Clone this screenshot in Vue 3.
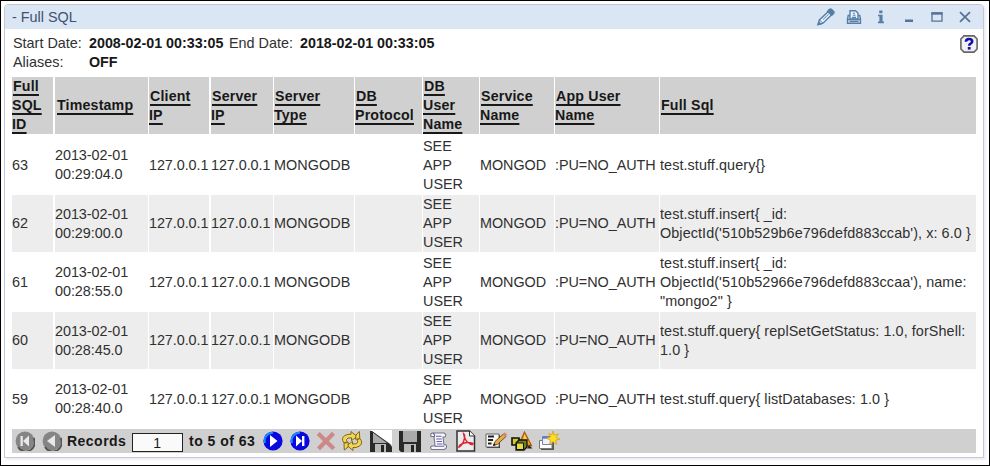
<script setup>
const columns = [
  { key: 'id', lines: ['Full', 'SQL', 'ID'] },
  { key: 'time', lines: ['Timestamp'] },
  { key: 'client', lines: ['Client', 'IP'] },
  { key: 'server', lines: ['Server', 'IP'] },
  { key: 'type', lines: ['Server', 'Type'] },
  { key: 'protocol', lines: ['DB', 'Protocol'] },
  { key: 'dbuser', lines: ['DB', 'User', 'Name'] },
  { key: 'service', lines: ['Service', 'Name'] },
  { key: 'appuser', lines: ['App User', 'Name'] },
  { key: 'sql', lines: ['Full Sql'] },
]

const record = (id, time, sql) => ({
  id: [id],
  time: ['2013-02-01', time],
  client: ['127.0.0.1'],
  server: ['127.0.0.1'],
  type: ['MONGODB'],
  protocol: [],
  dbuser: ['SEE', 'APP', 'USER'],
  service: ['MONGOD'],
  appuser: [':PU=NO_AUTH'],
  sql,
})

const rows = [
  record('63', '00:29:04.0', ['test.stuff.query{}']),
  record('62', '00:29:00.0', ['test.stuff.insert{ _id:', "ObjectId('510b529b6e796defd883ccab'), x: 6.0 }"]),
  record('61', '00:28:55.0', ['test.stuff.insert{ _id:', "ObjectId('510b52966e796defd883ccaa'), name:", '"mongo2" }']),
  record('60', '00:28:45.0', ['test.stuff.query{ replSetGetStatus: 1.0, forShell:', '1.0 }']),
  record('59', '00:28:40.0', ['test.stuff.query{ listDatabases: 1.0 }']),
]
</script>

<template>
  <div class="frame">
    <section class="panel">
      <header class="titlebar">
        <h1>- Full SQL</h1>
        <div class="window-tools">
          <svg width="18" height="18" viewBox="0 0 18 18" fill="none" stroke="#557fa6" stroke-width="1.4">
            <path d="M1 16.6 2.4 12 11.4 3.4 14.8 6.6 6 15.2Z" fill="#edf3fb" />
            <path d="M10.6 3.2 12.6 1.2Q13.5.5 14.4 1.2L16.8 3.6Q17.4 4.6 16.6 5.4L14.7 7.2Z" fill="#557fa6" />
            <path d="M2.4 12 6 15.2M6 11.6 11.6 6.2" stroke-width="1" />
            <path d="M1 16.6 1.8 14.2 3.6 16Z" fill="#557fa6" />
          </svg>
          <svg width="16" height="16" viewBox="0 0 16 16" fill="none" stroke="#557fa6" stroke-width="1.4">
            <path d="M4 10V1.7H9.5L12 4V10Z" fill="#edf3fb" />
            <path d="M4 6.5H2.2L1.5 10V14.2H14.5V10L13.8 6.5H12M1.5 10.5H14.5M3.5 12.4H12.5" />
            <path d="M6.8 4.2H9M6.8 6.3H9.5M6 8.4H10" stroke-width="1.1" />
          </svg>
          <svg width="10" height="16" viewBox="0 0 10 16" fill="#557fa6">
            <path d="M3.2 1.5H6.4V4.2H3.2ZM2 5.7H6.6V12.5H8V14.2H2V12.5H3.4V7.3H2Z" />
          </svg>
          <svg width="14" height="16" viewBox="0 0 14 16" fill="#587399"><path d="M3 10.5H11V13H3Z" /></svg>
          <svg width="14" height="16" viewBox="0 0 14 16" fill="none" stroke="#587399">
            <path d="M2 4H12V12.2H2Z" stroke-width="1.3" /><path d="M1.4 4.5H12.6" stroke-width="2.4" />
          </svg>
          <svg width="14" height="16" viewBox="0 0 14 16" stroke="#587399" stroke-width="1.8"><path d="M2 3.2 12 12.9M12 3.2 2 12.9" /></svg>
        </div>
      </header>

      <div class="summary">
        <dl>
          <dt>Start Date:</dt><dd>2008-02-01 00:33:05</dd>
          <dt class="end">End Date:</dt><dd>2018-02-01 00:33:05</dd>
          <dt>Aliases:</dt><dd>OFF</dd>
        </dl>
        <svg class="help" width="18" height="18" viewBox="0 0 18 18">
          <path d="M4 .9H14L17.1 4V14L14 17.1H4L.9 14V4Z" fill="#f1f1f4" stroke="#666" stroke-width="1.6" />
          <path d="M5.9 6.8Q5.9 4 9 4T12.2 6.5Q12.2 7.8 10.6 8.6 9.2 9.3 9.2 10.8" fill="none" stroke="#1010aa" stroke-width="2.6" />
          <path d="M7.8 12H10.6V14.6H7.8Z" fill="#1010aa" />
        </svg>
      </div>

      <div class="table" role="table">
        <div class="row head" role="row">
          <div v-for="c in columns" :key="c.key" class="cell" :class="c.key" role="columnheader">
            <span v-for="line in c.lines" :key="line">{{ line }}</span>
          </div>
        </div>
        <div v-for="(r, i) in rows" :key="i" class="row" :class="i % 2 ? 'shaded' : 'plain'" role="row">
          <div v-for="c in columns" :key="c.key" class="cell" :class="c.key" role="cell">
            <span v-for="line in r[c.key]" :key="line">{{ line }}</span>
          </div>
        </div>
      </div>

      <footer class="toolbar">
        <svg width="20" height="20" viewBox="0 0 20 20">
          <circle cx="10" cy="10" r="9.4" fill="#858585" /><path d="M3 16A9 9 0 0 0 18.6 7" fill="none" stroke="#555" stroke-width="1.8" />
          <path d="M5.5 5H7.8V15H5.5ZM14 4.5V15.5L8 10Z" fill="#e9e9e9" />
        </svg>
        <svg class="prev" width="20" height="20" viewBox="0 0 20 20">
          <circle cx="10" cy="10" r="9.4" fill="#858585" /><path d="M3 16A9 9 0 0 0 18.6 7" fill="none" stroke="#555" stroke-width="1.8" />
          <path d="M13 4V16L5 10Z" fill="#e9e9e9" />
        </svg>
        <span class="records">Records</span>
        <span class="page">1</span>
        <span class="total">to 5 of 63</span>
        <svg class="next" width="20" height="20" viewBox="0 0 20 20">
          <circle cx="10" cy="10" r="9.6" fill="#0808df" /><path d="M2 12A8 8 0 0 1 10 1.8" fill="none" stroke="#168bff" stroke-width="2" />
          <path d="M7 4V16L14.5 10Z" fill="#fff" />
        </svg>
        <svg class="last" width="20" height="20" viewBox="0 0 20 20">
          <circle cx="10" cy="10" r="9.6" fill="#0808df" /><path d="M2 12A8 8 0 0 1 10 1.8" fill="none" stroke="#168bff" stroke-width="2" />
          <path d="M6 4.5V15.5L12 10ZM12 5H14.4V15H12Z" fill="#fff" />
        </svg>
        <svg class="delete" width="20" height="20" viewBox="0 0 20 20" stroke="#cc8988" stroke-width="4.2"><path d="M2.2 2.5 17.8 17.8M17.5 2.2 2.5 17.8" /></svg>
        <svg class="refresh" width="22" height="22" viewBox="0 0 22 22" stroke="#806522" stroke-width="1" fill="#f4d74a">
          <path d="M3 13Q-.5 8 4 5.5Q7 3.8 10 4.3V1.5L16 6.5 10.5 10.5V7.8Q6 7.4 5.5 9.5Q5.3 10.8 6.4 11.6Z" />
          <path d="M19 8.5Q22.8 13.5 18 16.3Q15 18 12 17.5V20.5L6 15.5 11.5 11.3V14.1Q16 14.4 16.8 12.3Q17 11 15.8 9.8Z" />
          <path d="M15 5 18.3 1.5 18.8 8.5 14.6 9.3Z" /><path d="M7 17 3.3 20 3 13.2 7.3 12.5Z" />
        </svg>
        <svg class="save-as" width="22" height="22" viewBox="0 0 22 22">
          <path d="M0 0H22V15Z" fill="#fff" /><path d="M0 1H2L20 14 22 17V22H0Z" fill="#292929" />
          <path d="M3 2.8 17 13H3Z" fill="#aaa" /><path d="M5 14H16V22H5Z" fill="#b9b9b9" /><path d="M11 15H14V22H11Z" fill="#222" />
        </svg>
        <svg class="save" width="22" height="22" viewBox="0 0 22 22">
          <path d="M0 1H22V22H2L0 20Z" fill="#292929" /><path d="M4 1H18V12H4Z" fill="#aaa" />
          <path d="M5 14H17V22H5Z" fill="#b9b9b9" /><path d="M12 15H15V22H12Z" fill="#222" />
        </svg>
        <svg class="script" width="20" height="20" viewBox="0 0 20 20" fill="#f8f7ff" stroke="#77778c" stroke-width="1.1">
          <path d="M4 2Q1 2 2 5.5H5L6 15H3Q.5 16 2.5 18.5H15Q18.8 17 17 13.8H15L14 6H16Q18 3.5 15 2Z" />
          <path d="M5 6Q6.8 4.5 4 2M6 15.2H15.3M7 5.2H12.5M7.2 8H12.7M7.5 10.5H13M8 13H13.5" stroke="#6262a3" fill="none" />
        </svg>
        <svg class="pdf" width="20" height="22" viewBox="0 0 20 22">
          <path d="M1 1H13.5L18.5 6V21H1Z" fill="#ececef" stroke="#323232" stroke-width="1.5" />
          <path d="M13.5 1V6H18.5" fill="#fff" stroke="#323232" />
          <path d="M7.6 3.5Q8.5 10 12.5 13T17 13.5Q12 11.5 7.5 13.2T3 17Q7.5 14.5 8.6 7.5Q9 4.5 7.6 3.5Z" fill="none" stroke="#e02229" stroke-width="1.5" />
        </svg>
        <svg class="edit" width="22" height="20" viewBox="0 0 22 20">
          <path d="M2 4H15V17H2Z" fill="#333" /><path d="M1 3H14V16H1Z" fill="#f7f7f5" stroke="#666" />
          <path d="M3 5.5H9M3 9H8M3 12.5H6.5" stroke="#222" stroke-width="1.9" />
          <path d="M8.5 14.5 10 10.5 18.5 3 21 5.5 12.4 13.3Z" fill="#e8ac4c" stroke="#74521e" /><path d="M18 3 20 1.2 22 3.5 20.8 5.8Z" fill="#d88672" /><path d="M8 15 9 12.3 10.7 14Z" fill="#111" />
        </svg>
        <svg class="shapes" width="22" height="20" viewBox="0 0 22 20" stroke="#111">
          <path d="M13.5 1.2 20.5 14.5H7.5Z" fill="#ff9d16" stroke="#a65b10" stroke-width="1.3" /><path d="M13.5 3 17.5 12H12Z" fill="#ffd34b" stroke="none" />
          <path d="M1 7H8V14H1Z" fill="#cfca2d" stroke-width="1.6" /><path d="M5 12 8 9H16V16L13 19H5Z" fill="#777b22" stroke-width="1.3" /><path d="M5.5 12H12.5V18.5H5.5Z" fill="#e3df35" /><path d="M18 14 21.5 17.5H16Z" fill="#222" stroke="none" />
        </svg>
        <svg class="new" width="22" height="20" viewBox="0 0 22 20">
          <path d="M3 11H16V19H3Z" fill="#555" /><path d="M1.5 9.5H14V17.5H1.5Z" fill="#fff" stroke="#777" />
          <path d="M4.5 5.5H14V13.5H4.5Z" fill="#f1f1fb" stroke="#7783b2" /><path d="M4.5 5.5H12V7.7H4.5Z" fill="#637bc8" />
          <path d="M15 0 16.3 4.2 20.5 2.8 18 6.3 22 8.3 17.8 9 18.5 13.5 15 10.7 11.6 13 12.4 9 8.5 7.3 12.5 6 10.8 2.2 14 4Z" fill="#ffdc28" stroke="#d3a415" stroke-width=".8" />
        </svg>
      </footer>
    </section>
  </div>
</template>

<style>
body { margin: 0; background: #fff; }
</style>

<style scoped>
* { box-sizing: border-box; }
svg { display: block; flex: none; }
.frame {
  width: 990px;
  height: 466px;
  padding: 3px 5px 7px 3px;
  border: 1px solid #000;
  background: #fff;
  font-family: "Liberation Sans", Arial, sans-serif;
  font-size: 14.4px;
  line-height: 19px;
  color: #303030;
}
.panel {
  height: 454px;
  width: 980px;
  border: 1px solid #c6c6d7;
  border-radius: 4px 4px 0 0;
  box-shadow: 2px 2px 2px #eeeef5;
}
.titlebar {
  height: 24px;
  display: flex;
  align-items: center;
  justify-content: space-between;
  padding: 0 11px 0 7px;
  background: #dbe6f5;
  border-radius: 3px 3px 0 0;
}
h1 { margin: 0; font-size: 14.4px; font-weight: 400; color: #3d526f; }
.window-tools { display: flex; align-items: center; gap: 14px; }
.window-tools svg:nth-child(1) { margin-right: 1px; }
.window-tools svg:nth-child(2) { margin-left: -4px; }
.window-tools svg:nth-child(3) { margin: 0 -1px 0 0; }
.window-tools svg:nth-child(1),
.window-tools svg:nth-child(2),
.window-tools svg:nth-child(3) { position: relative; left: -3px; }
.summary { height: 48px; display: flex; justify-content: space-between; padding: 5px 6px 0 8px; }
dl { margin: 0; display: grid; grid-template-columns: 76px 141px 71px 140px; align-content: start; white-space: nowrap; }
dt, dd { margin: 0; }
dd { font-size: 14.3px; font-weight: 700; color: #181818; }
.end { margin-left: -1px; }
dd:nth-of-type(2) { margin-left: -1px; }
.help { margin: 1px -1px 0 0; }
.table { display: flex; flex-direction: column; gap: 1px; margin: 0 7px; }
.row {
  display: grid;
  grid-template-columns: 42px 93px 61px 62px 80px 67px 56px 74px 104px 316px;
  column-gap: 1px;
  height: 58px;
}
.cell { display: flex; flex-direction: column; align-items: flex-start; justify-content: center; white-space: nowrap; }
.id, .client { margin-right: 1px; }
.client, .server { letter-spacing: -.07px; }
.type { letter-spacing: .05px; }
.service, .appuser { letter-spacing: -.04px; }
.sql { letter-spacing: .08px; }
.time { letter-spacing: -.05px; }
.plain:nth-child(2) { height: 59px; padding-top: 1px; }
.head, .shaded { height: 57px; }
.shaded .cell { background: #ededed; }
.head .cell { background: #d0d0d0; font-size: 14.2px; font-weight: 700; letter-spacing: .18px; color: #181818; }
.head span { text-decoration: underline; text-decoration-thickness: 1.5px; text-underline-offset: 3px; }
.head span:first-child { padding-left: 1px; }
.head .time span { padding-left: 2px; }
.toolbar {
  height: 24px;
  margin: 1px 7px 0;
  padding: 0 3px;
  display: flex;
  align-items: center;
  background: #d0d0d0;
  font-size: 14px;
  font-weight: 700;
  letter-spacing: .48px;
  color: #181818;
  white-space: nowrap;
}
.prev { margin-left: 7px; }
.records, .total { padding-top: 1px; }
.records { width: 65px; margin-left: 5px; }
.page { width: 51px; height: 19px; margin-top: 3px; border: 1px solid #222; background: #fafafa; text-align: center; font-weight: 400; line-height: 18px; }
.total { width: 69px; margin-left: 6px; }
.next { margin-left: 5px; }
.last { margin-left: 7px; }
.delete { margin-left: 6px; }
.refresh { margin-left: 5px; }
.save-as { margin-left: 7px; }
.save { margin-left: 7px; }
.script { margin-left: 8px; }
.pdf { margin-left: 7px; }
.edit { margin-left: 9px; }
.shapes { margin-left: 4px; }
.new { margin-left: 5px; }
</style>
